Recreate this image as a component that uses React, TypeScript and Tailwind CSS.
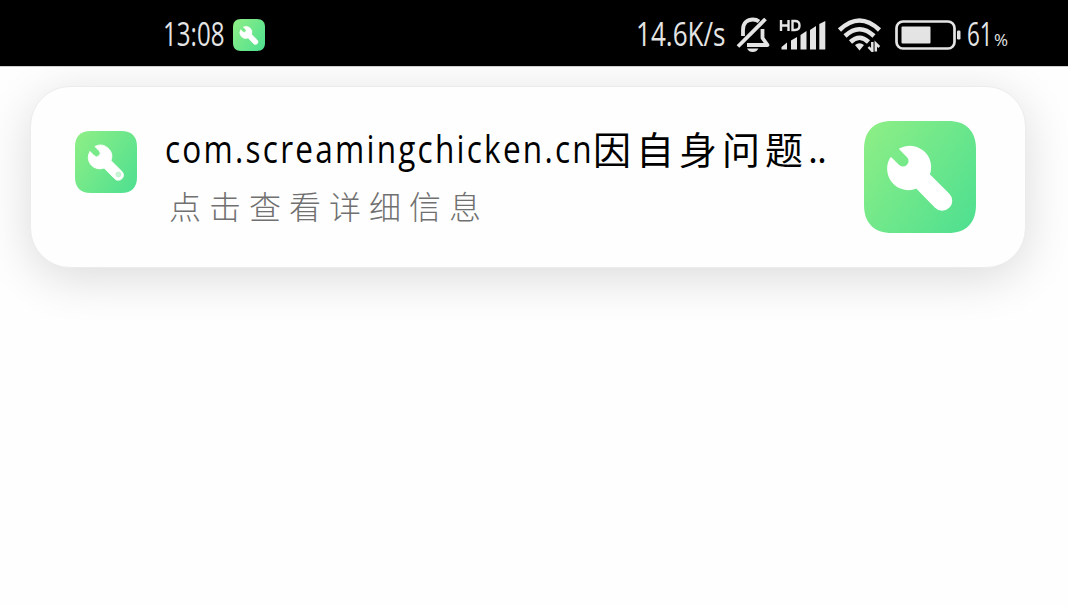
import React from "react";

function WrenchTile({ id, className, hole }: { id: string; className: string; hole?: boolean }) {
  return (
    <svg viewBox="0 0 112 112" className={className} aria-hidden="true">
      <defs>
        <linearGradient id={id} x1="0" y1="0.15" x2="1" y2="0.85">
          <stop offset="0" stopColor="#8bee86" />
          <stop offset="1" stopColor="#51e090" />
        </linearGradient>
      </defs>
      <path
        fill={`url(#${id})`}
        d="M28 0H84C102 0 112 10 112 28V84C112 102 102 112 84 112H28C10 112 0 102 0 84V28C0 10 10 0 28 0Z"
      />
      <path
        fill="#fff"
        stroke="#fff"
        strokeWidth="1.6"
        strokeLinejoin="round"
        d="M27 37L34.300 44.400A6 6 0 0 0 43.600 35.600L36 28A20.600 20.600 0 0 1 65 53.500L84.800 73.200A9.200 9.200 0 0 1 71.600 86.200L52.500 66.800A20.600 20.600 0 0 1 27 37Z"
      />
      {hole && <circle cx="78.5" cy="78.5" r="4.5" fill="#c9f5d6" stroke="#a8edc0" />}
    </svg>
  );
}

function MutedBell() {
  return (
    <svg width="34" height="38" viewBox="0 0 34 38" fill="none" stroke="#e4e4e4" aria-hidden="true">
      <path d="M7 20V14C7 6.500 11.500 3.500 17 3.500Q20.500 3.500 23 5.500" strokeWidth="3.800" />
      <path d="M26.500 13V22L31.500 29H11" strokeWidth="3.800" strokeLinejoin="round" />
      <path d="M2 30.500L29.500 3" strokeWidth="3.800" />
      <path d="M11 32.500H22.500Q20.500 36 16.700 36T11 32.500Z" fill="#e4e4e4" stroke="none" />
    </svg>
  );
}

function Signal() {
  return (
    <svg width="48" height="34" viewBox="0 0 48 34" aria-hidden="true">
      <g fill="#e4e4e4">
        <path d="M2.500 28L8 23.500V30.500H2.500Z" />
        <path d="M12 21.500L18 18V30.500H12Z" />
        <path d="M21.500 16L27.500 12V30.500H21.500Z" />
        <path d="M31 11L37 7V30.500H31Z" />
        <path d="M40.300 5L46.300 2V30.500H40.300Z" />
      </g>
      <g fill="none" stroke="#e4e4e4" strokeWidth="2.400">
        <path d="M2 1V12M9.500 1V12M2 6.500H9.500" />
        <path d="M13.500 2V11H16Q20.500 11 20.500 6.500T16 2Z" />
      </g>
    </svg>
  );
}

function Wifi() {
  return (
    <svg width="44" height="34" viewBox="0 0 44 34" fill="none" stroke="#e4e4e4" aria-hidden="true">
      <path d="M1.500 12Q21.500 -7 41.500 12" strokeWidth="4.500" />
      <path d="M7 18Q21.500 4.500 36 18" strokeWidth="4.500" />
      <path d="M12.500 24Q21.500 15.500 30.500 24" strokeWidth="4.500" />
      <path d="M17 27Q21.500 23.500 26 27L21.500 32.500Z" fill="#e4e4e4" stroke="none" />
      <path d="M34.300 24V33L30.500 29M37.800 33.500V25.500L41.300 29" strokeWidth="2.500" />
    </svg>
  );
}

function Battery() {
  return (
    <svg width="67" height="30" viewBox="0 0 67 30" aria-hidden="true">
      <rect x="1.500" y="1.500" width="58" height="27" rx="6.500" fill="none" stroke="#e4e4e4" strokeWidth="2.700" />
      <rect x="6.500" y="6.500" width="29" height="17" rx="1" fill="#e4e4e4" />
      <rect x="62" y="10.500" width="3.500" height="9" rx="1.300" fill="#e4e4e4" />
    </svg>
  );
}

function StatusBar() {
  return (
    <header className="flex h-[66px] items-start bg-black pl-[163px] font-['Open_Sans',sans-serif] font-normal whitespace-nowrap text-[#e4e4e4]">
      <div className="mt-4 w-[70px] text-[33px] leading-9">
        <span className="inline-block origin-left scale-x-[0.73]">13:08</span>
      </div>
      <WrenchTile id="status-app" className="mt-[19px] size-8" />
      <div className="mt-4 ml-[371px] w-[100px] text-[33px] leading-9">
        <span className="inline-block origin-left scale-x-[0.79]">14.6K/s</span>
      </div>
      <div className="mt-4"><MutedBell /></div>
      <div className="mt-[19px] ml-[9px]"><Signal /></div>
      <div className="mt-[18px] ml-[11px]"><Wifi /></div>
      <div className="mt-5 ml-[13px]"><Battery /></div>
      <div className="mt-4 ml-[5px] flex items-baseline leading-9">
        <span className="w-[27px] text-[33px]">
          <span className="inline-block origin-left scale-x-[0.68]">61</span>
        </span>
        <span className="text-[17px]">%</span>
      </div>
    </header>
  );
}

export default function App() {
  return (
    <div className="h-[606px] w-[1080px] overflow-hidden bg-white">
      <div className="h-full w-[1068px] overflow-hidden bg-[#fefefe]">
        <StatusBar />
        <main className="h-[540px] overflow-hidden border-t border-[#cfcfcf] px-[30px] pt-[19px]">
          <section className="flex h-[182px] w-[996px] items-start rounded-[40px] border border-[#ececec] bg-[#fefefe] pl-11 shadow-[0_10px_48px_rgba(0,0,0,0.14)]">
            <WrenchTile id="notice-app" className="mt-11 size-[62px] shrink-0" hole />
            <div className="ml-7 w-[672px] shrink-0 whitespace-nowrap">
              <h1 className="mt-[34px] flex h-[54px] items-center text-[38px] leading-[54px] font-normal text-black">
                <span className="w-[428px] font-['Open_Sans',sans-serif]">
                  <span className="inline-block origin-left scale-x-[0.83] tracking-[2.7px]">com.screamingchicken.cn</span>
                </span>
                <span className="font-['Noto_Sans_CJK_SC',sans-serif] tracking-[5px]">因自身问题</span>
                <span className="font-['Open_Sans',sans-serif] tracking-[-1px]">..</span>
              </h1>
              <p className="mt-[10px] ml-1 font-['Noto_Sans_CJK_SC',sans-serif] text-[32px] leading-10 font-light tracking-[8px] text-[#707070]">
                点击查看详细信息
              </p>
            </div>
            <WrenchTile id="notice-large" className="mt-[34px] ml-[27px] size-28 shrink-0" />
          </section>
        </main>
      </div>
    </div>
  );
}
